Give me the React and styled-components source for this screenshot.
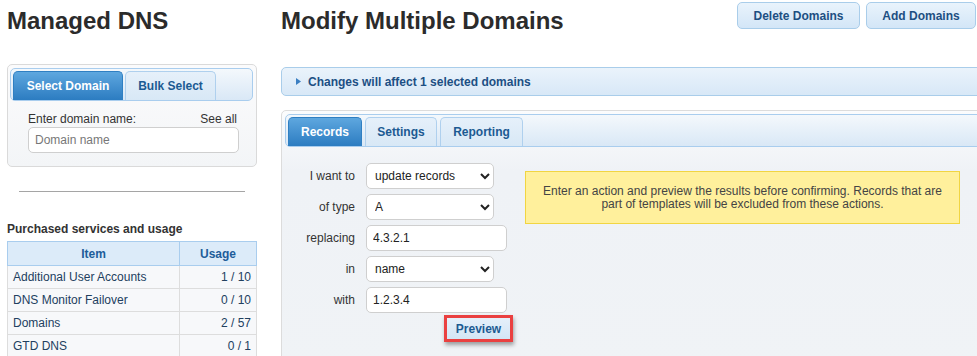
// App.jsx
import { styled, createGlobalStyle } from "styled-components";

const Global = createGlobalStyle`
  html, body {
    margin: 0;
    padding: 0;
    background: #ffffff;
    overflow: hidden;
  }
  body {
    font-family: "Liberation Sans", Arial, sans-serif;
    font-size: 12px;
    color: #333;
  }
`

const Page = styled.div`
  display: flex;
  align-items: flex-start;
  gap: 24px;
  padding-left: 7px;
  width: 1000px;
`

const Sidebar = styled.div`
  width: 250px;
  flex-shrink: 0;
`

const Main = styled.div`
  width: 710px;
  flex-shrink: 0;
`

const Title = styled.h1`
  margin: 7px 0 0;
  font-size: 24px;
  line-height: 28px;
  font-weight: bold;
  color: #2b2b2b;
`

const Header = styled.div`
  display: flex;
  justify-content: space-between;
  align-items: flex-start;
  padding-right: 15px;
`

const ButtonGroup = styled.div`
  display: flex;
  gap: 6px;
  margin-top: 2px;
`

const TopButton = styled.button`
  height: 27px;
  width: ${p => p.$w}px;
  padding: 0;
  border: 1px solid #a9cdea;
  border-radius: 5px;
  background: linear-gradient(#e9f3fc, #d3e6f7);
  color: #1d4f82;
  font-family: inherit;
  font-size: 12px;
  font-weight: bold;
`

/* ---- left panel ---- */

const DomainBox = styled.div`
  margin-top: 29px;
  height: 103px;
  box-sizing: border-box;
  border: 1px solid #dadada;
  border-radius: 5px;
  background: linear-gradient(#fbfbfc, #f3f5f7);
  padding: 3px 3px 0 2px;
`

const TabBar = styled.div`
  display: flex;
  align-items: flex-end;
  gap: ${p => p.$gap || 2}px;
  height: ${p => p.$h || 33}px;
  box-sizing: border-box;
  padding-left: 2px;
  border: 1px solid #a9cdee;
  border-radius: 5px;
  background: linear-gradient(#f4f8fc, #d9e8f6);
`

const Tab = styled.div`
  height: ${p => p.$h || 29}px;
  box-sizing: border-box;
  display: flex;
  align-items: center;
  justify-content: center;
  width: ${p => p.$w}px;
  border: 1px solid ${p => (p.$active ? "#2f7fc2" : "#afd0ee")};
  border-bottom: none;
  border-radius: 5px 5px 0 0;
  background: ${p => (p.$active ? "linear-gradient(#5ea7df, #2c7cc1)" : "linear-gradient(#e6f0fa, #d8e8f6)")};
  color: ${p => (p.$active ? "#fff" : "#1c5a92")};
  font-weight: bold;
  font-size: 12px;
`

const DomainForm = styled.div`
  padding: 11px 16px 0 18px;
`

const LabelRow = styled.div`
  display: flex;
  justify-content: space-between;
  color: #333;
  line-height: 14px;
  margin-bottom: 1px;
`

const TextInput = styled.input`
  width: ${p => p.$w || 211}px;
  height: 26px;
  box-sizing: border-box;
  border: 1px solid #cfcfcf;
  border-radius: 5px;
  padding: 0 6px;
  font-family: inherit;
  font-size: 12px;
  color: #222;
  background: #fff;
  &::placeholder {
    color: #777;
  }
`

const Rule = styled.hr`
  margin: 24px 12px 0;
  border: none;
  border-top: 1px solid #a5a5a5;
`

const SectionTitle = styled.div`
  margin-top: 30px;
  font-weight: bold;
  color: #333;
  line-height: 14px;
`

const UsageTable = styled.table`
  margin-top: 5px;
  width: 250px;
  border-collapse: collapse;
  font-size: 12px;
  th {
    height: 23px;
    padding: 0;
    background: #dcebf9;
    border: 1px solid #a9cdee;
    color: #1e5d9a;
    font-weight: bold;
  }
  td {
    height: 22px;
    padding: 0 5px;
    background: #f7f8fa;
    border: 1px solid #dddddd;
    color: #22405f;
  }
  td:last-child {
    text-align: right;
  }
`

/* ---- right panel ---- */

const InfoBar = styled.div`
  margin-top: 32px;
  height: 29px;
  box-sizing: border-box;
  display: flex;
  align-items: center;
  gap: 7px;
  padding-left: 14px;
  border: 1px solid #a9cdea;
  border-radius: 5px;
  background: linear-gradient(#eaf3fb, #d8e8f7);
  color: #1c4f84;
  font-weight: bold;
`

const TabPanel = styled.div`
  margin-top: 14px;
  border: 1px solid #dcdcdc;
  border-radius: 5px;
  padding: 3px;
  height: 260px;
  background: linear-gradient(#fbfcfd, #eff2f6 60px, #f0f3f6);
`

const FormArea = styled.div`
  display: flex;
  align-items: flex-start;
  padding-top: 16px;
`

const FormGrid = styled.div`
  display: grid;
  grid-template-columns: 70px auto;
  column-gap: 11px;
  row-gap: 5px;
  align-items: center;
`

const Label = styled.label`
  text-align: right;
  color: #333;
`

const Select = styled.select`
  width: 128px;
  height: 26px;
  border: 1px solid #cfcfcf;
  border-radius: 5px;
  padding: 0 4px;
  background: #fff;
  font-family: inherit;
  font-size: 12px;
  color: #222;
`

const PreviewCell = styled.div`
  grid-column: 2;
  padding-left: 78px;
  margin-top: -3px;
`

const Highlight = styled.div`
  display: inline-block;
  border: 3px solid #ea4040;
  box-shadow: 1px 3px 4px rgba(0, 0, 0, 0.35);
`

const PreviewButton = styled.button`
  display: block;
  width: 63px;
  height: 21px;
  border: none;
  background: linear-gradient(#e5f0fa, #d3e5f5);
  color: #1c5a92;
  font-family: inherit;
  font-size: 12px;
  font-weight: bold;
`

const Notice = styled.div`
  margin: 8px 0 0 12px;
  width: 435px;
  height: 53px;
  box-sizing: border-box;
  display: flex;
  align-items: center;
  justify-content: center;
  text-align: center;
  padding: 0 16px;
  border: 1px solid #f1d542;
  background: #fff09c;
  color: #444;
  line-height: 13px;
`

const Caret = () => (
  <svg width="5" height="7" viewBox="0 0 5 7">
    <path d="M0 0 L5 3.5 L0 7 Z" fill="#3b7fc2" />
  </svg>
)

const usage = [
  ["Additional User Accounts", "1 / 10"],
  ["DNS Monitor Failover", "0 / 10"],
  ["Domains", "2 / 57"],
  ["GTD DNS", "0 / 1"],
]

const App = () => {
  return (
    <>
      <Global />
      <Page>
        <Sidebar>
          <Title>Managed DNS</Title>
          <DomainBox>
            <TabBar>
              <Tab $active $w={110}>Select Domain</Tab>
              <Tab $w={91}>Bulk Select</Tab>
            </TabBar>
            <DomainForm>
              <LabelRow>
                <span>Enter domain name:</span>
                <span>See all</span>
              </LabelRow>
              <TextInput placeholder="Domain name" />
            </DomainForm>
          </DomainBox>
          <Rule />
          <SectionTitle>Purchased services and usage</SectionTitle>
          <UsageTable>
            <thead>
              <tr>
                <th style={{ width: 171 }}>Item</th>
                <th>Usage</th>
              </tr>
            </thead>
            <tbody>
              {usage.map(([item, val]) => (
                <tr key={item}>
                  <td>{item}</td>
                  <td>{val}</td>
                </tr>
              ))}
            </tbody>
          </UsageTable>
        </Sidebar>

        <Main>
          <Header>
            <Title>Modify Multiple Domains</Title>
            <ButtonGroup>
              <TopButton $w={123}>Delete Domains</TopButton>
              <TopButton $w={110}>Add Domains</TopButton>
            </ButtonGroup>
          </Header>

          <InfoBar>
            <Caret />
            <span>Changes will affect 1 selected domains</span>
          </InfoBar>

          <TabPanel>
            <TabBar $gap={3}>
              <Tab $active $w={74}>Records</Tab>
              <Tab $w={72}>Settings</Tab>
              <Tab $w={83}>Reporting</Tab>
            </TabBar>
            <FormArea>
              <FormGrid>
                <Label>I want to</Label>
                <Select defaultValue="update">
                  <option value="update">update records</option>
                </Select>
                <Label>of type</Label>
                <Select defaultValue="A">
                  <option value="A">A</option>
                </Select>
                <Label>replacing</Label>
                <TextInput $w={141} defaultValue="4.3.2.1" />
                <Label>in</Label>
                <Select defaultValue="name">
                  <option value="name">name</option>
                </Select>
                <Label>with</Label>
                <TextInput $w={141} defaultValue="1.2.3.4" />
                <PreviewCell>
                  <Highlight>
                    <PreviewButton>Preview</PreviewButton>
                  </Highlight>
                </PreviewCell>
              </FormGrid>
              <Notice>
                Enter an action and preview the results before confirming. Records that are part of templates will be excluded from these actions.
              </Notice>
            </FormArea>
          </TabPanel>
        </Main>
      </Page>
    </>
  )
}

export default App
